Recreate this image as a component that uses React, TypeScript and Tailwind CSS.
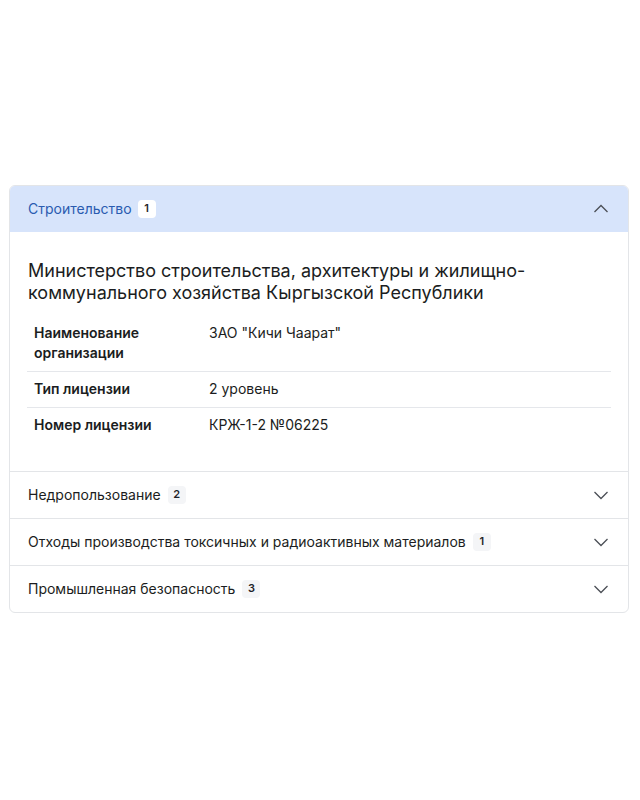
import React from 'react';

interface Row {
  label: string;
  value: string;
}

const rows: Row[] = [
  { label: 'Наименование организации', value: 'ЗАО "Кичи Чаарат"' },
  { label: 'Тип лицензии', value: '2 уровень' },
  { label: 'Номер лицензии', value: 'КРЖ-1-2 №06225' },
];

const collapsed = [
  { title: 'Недропользование', count: 2 },
  { title: 'Отходы производства токсичных и радиоактивных материалов', count: 1 },
  { title: 'Промышленная безопасность', count: 3 },
];

function Chevron({ up }: { up?: boolean }) {
  return (
    <svg viewBox="0 0 16 16" className="w-4 h-4 text-[#4b4f56]" fill="none" stroke="currentColor" strokeWidth="1.3">
      {up ? <polyline points="1.5,11 8,4.5 14.5,11" /> : <polyline points="1.5,5 8,11.5 14.5,5" />}
    </svg>
  );
}

export default function App() {
  return (
    <div
      className="min-h-[800px] flex items-center bg-white pl-[9px] pr-[11px] pb-[3px]"
      style={{ fontFamily: 'Inter, "Noto Sans", sans-serif' }}
    >
      <div className="w-full rounded-md border border-[#e3e5e8] overflow-hidden">
        {/* Open section */}
        <div className="h-[46px] flex items-center justify-between bg-[#d7e4fb] pl-[18px] pr-[19px]">
          <div className="flex items-center gap-[6px]">
            <span className="text-[14px] text-[#2a5bb0]">Строительство</span>
            <span className="h-[18px] min-w-[18px] px-[5px] rounded-[4px] bg-white text-[11px] font-semibold text-[#1f2328] flex items-center justify-center">
              1
            </span>
          </div>
          <Chevron up />
        </div>
        <div className="px-[17px] pt-[28px] pb-[28px]">
          <h2 className="px-px text-[18px] leading-[22px] text-[#1b1d21] mb-[12px]">
            Министерство строительства, архитектуры и жилищно-коммунального хозяйства Кыргызской Республики
          </h2>
          <div>
            {rows.map((r, i) => (
              <div
                key={r.label}
                className={`grid grid-cols-[175px_1fr] pl-[7px] pr-2 py-[7.5px] text-[14px] leading-[20px] text-[#1b1d21] ${
                  i < rows.length - 1 ? 'border-b border-[#e5e7eb]' : ''
                }`}
              >
                <div className="font-semibold pr-4">{r.label}</div>
                <div>{r.value}</div>
              </div>
            ))}
          </div>
        </div>

        {/* Collapsed sections */}
        {collapsed.map((c) => (
          <div
            key={c.title}
            className="h-[47px] border-t border-[#e3e5e8] flex items-center justify-between pl-[18px] pr-[19px]"
          >
            <div className="flex items-center gap-[7px]">
              <span className="text-[14px] text-[#1b1d21]">{c.title}</span>
              <span className="h-[18px] min-w-[18px] px-[5px] rounded-[4px] bg-[#f4f5f7] text-[11px] font-semibold text-[#1f2328] flex items-center justify-center">
                {c.count}
              </span>
            </div>
            <Chevron />
          </div>
        ))}
      </div>
    </div>
  );
}
